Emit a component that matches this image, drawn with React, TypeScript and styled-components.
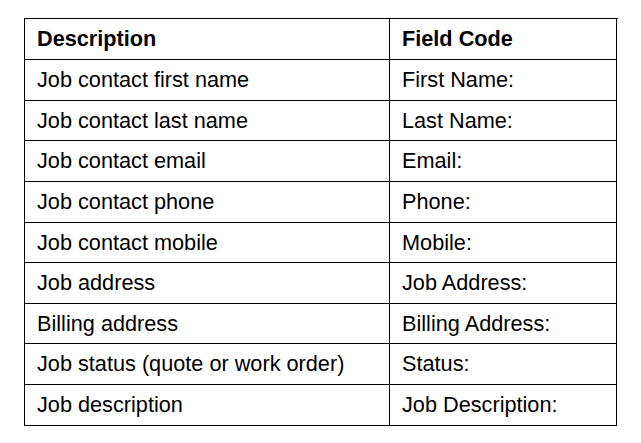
import React from "react";
import styled, { createGlobalStyle } from "styled-components";

const Global = createGlobalStyle`
  html, body { margin: 0; padding: 0; background: #ffffff; }
  body { font-family: "Liberation Sans", Arial, sans-serif; color: #000; }
`;

const Page = styled.div`
  padding: 18px 0 0 24px;
`;

const Table = styled.div`
  display: grid;
  grid-template-columns: 365px 227px;
  width: 593px;
  border-left: 1px solid #000;
  border-top: 1px solid #000;
`;

const Cell = styled.div<{ $h: number; $head?: boolean }>`
  box-sizing: border-box;
  height: ${(p) => p.$h}px;
  border-right: 1px solid #000;
  border-bottom: 1px solid #000;
  display: flex;
  align-items: center;
  padding: 0 0 0 12px;
  font-size: 21.7px;
  line-height: 1;
  font-weight: ${(p) => (p.$head ? 700 : 400)};
  white-space: nowrap;
`;

const rows: [string, string][] = [
  ["Description", "Field Code"],
  ["Job contact first name", "First Name:"],
  ["Job contact last name", "Last Name:"],
  ["Job contact email", "Email:"],
  ["Job contact phone", "Phone:"],
  ["Job contact mobile", "Mobile:"],
  ["Job address", "Job Address:"],
  ["Billing address", "Billing Address:"],
  ["Job status (quote or work order)", "Status:"],
  ["Job description", "Job Description:"],
];

const heights = [41, 41, 40, 41, 41, 40, 41, 40, 41, 41];

export default function App() {
  return (
    <>
      <Global />
      <Page>
        <Table>
          {rows.map(([a, b], i) => (
            <React.Fragment key={i}>
              <Cell $h={heights[i]} $head={i === 0}>
                {a}
              </Cell>
              <Cell $h={heights[i]} $head={i === 0}>
                {b}
              </Cell>
            </React.Fragment>
          ))}
        </Table>
      </Page>
    </>
  );
}
